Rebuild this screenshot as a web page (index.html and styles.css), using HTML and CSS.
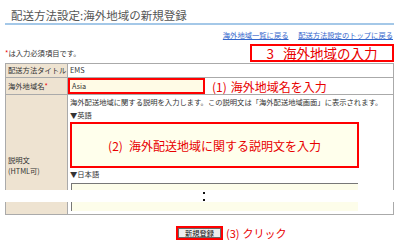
FILE: index.html
```html
<!DOCTYPE html>
<html lang="ja">
<head>
    <meta charset="UTF-8">
    <meta name="viewport" content="width=device-width, initial-scale=1.0">
    <title>配送方法設定:海外地域の新規登録</title>
    <link rel="stylesheet" href="styles.css">
</head>
<body>
    <div class="page">
        <h1 class="page-title">配送方法設定:海外地域の新規登録</h1>
        <!-- Back links -->
        <div class="links">
            <a href="#">海外地域一覧に戻る</a>
            <a href="#">配送方法設定のトップに戻る</a>
        </div>
        <div class="note-row">
            <p class="note"><span class="req">*</span>は入力必須項目です。</p>
            <div class="step-box"><span class="num">3</span>海外地域の入力</div>
        </div>
        <!-- Form table -->
        <div class="form-wrap">
            <table class="form-table">
                <colgroup>
                    <col class="col-label">
                    <col>
                </colgroup>
                <tr class="row-title">
                    <th>配送方法タイトル</th>
                    <td>EMS</td>
                </tr>
                <tr class="row-name">
                    <th>海外地域名<span class="req">*</span></th>
                    <td>
                        <div class="name-cell">
                            <span class="field">Asia</span>
                            <span class="hint"><span class="num">(1)</span>海外地域名を入力</span>
                        </div>
                    </td>
                </tr>
                <tr class="row-desc">
                    <th>
                        <span class="label-line">説明文</span>
                        <span class="label-line">(HTML可)</span>
                    </th>
                    <td>
                        <p>海外配送地域に関する説明を入力します。この説明文は「海外配送地域画面」に表示されます。</p>
                        <p>▼英語</p>
                        <div class="area area-marked">
                            <span class="hint"><span class="num">(2)</span>海外配送地域に関する説明文を入力</span>
                        </div>
                        <p>▼日本語</p>
                        <div class="area"></div>
                    </td>
                </tr>
            </table>
            <!-- cut mark over the long textarea -->
            <div class="cut"><i></i><i></i></div>
        </div>
        <div class="actions">
            <span class="btn-mark">
                <button type="button" class="btn">新規登録</button>
                <span class="hint click"><span class="num">(3)</span>クリック</span>
            </span>
        </div>
    </div>
</body>
</html>
```

FILE: styles.css
```css
/* Reset styles */
* {
    margin: 0;
    padding: 0;
    box-sizing: border-box;
}
body {
    font-family: "Noto Sans CJK JP", sans-serif;
    font-size: 7.3px;
    color: #333;
    background: #fff;
}
.page {
    width: 389px;
    margin-left: 5px;
    padding-top: 7px;
}
/* Page title */
.page-title {
    font-size: 11.5px;
    font-weight: normal;
    color: #555;
    line-height: 16px;
    padding-left: 6px;
    border-bottom: 2px solid #a4c8e8;
}
.links {
    text-align: right;
    margin-top: 4px;
    padding-right: 1px;
    line-height: 12px;
}
.links a {
    color: #3366cc;
    margin-left: 8px;
}
.note-row {
    display: flex;
    justify-content: space-between;
    align-items: center;
    height: 18px;
    margin-top: 3px;
}
.req {
    color: #e00;
}
/* Red annotation boxes and texts */
.step-box {
    width: 144px;
    height: 18px;
    border: 2px solid #f00;
    color: #e80000;
    font-size: 13.5px;
    line-height: 14px;
    text-align: center;
}
.hint {
    color: #e80000;
    font-size: 12px;
    white-space: nowrap;
}
.num {
    margin-right: 6px;
}
.step-box .num {
    margin-right: 9px;
}
.click .num {
    margin-right: 3px;
}
/* Form table */
.form-wrap {
    position: relative;
    margin-top: 1px;
}
.form-table {
    width: 100%;
    border-collapse: collapse;
    table-layout: fixed;
}
.col-label {
    width: 62px;
}
.form-table th,
.form-table td {
    border: 1px solid #aaa;
    text-align: left;
    font-weight: normal;
    padding: 0 2px;
    white-space: nowrap;
    vertical-align: middle;
}
.form-table th {
    background: #eee3d1;
}
.row-title th,
.row-title td {
    height: 14px;
    line-height: 13px;
}
.row-name td {
    padding: 0;
}
.name-cell {
    display: flex;
    align-items: center;
    gap: 7px;
    height: 16px;
}
.name-cell .num {
    margin-right: 4px;
}
.field {
    width: 137px;
    height: 16px;
    border: 2px solid #f00;
    background: #fffbe6;
    padding-left: 2px;
    line-height: 12px;
}
.row-desc th {
    vertical-align: top;
    padding-top: 60px;
}
.label-line {
    display: block;
    line-height: 11px;
}
.row-desc td {
    vertical-align: top;
    padding: 1px 2px 3px;
}
.row-desc p {
    line-height: 13px;
}
.area {
    width: 287px;
    height: 28px;
    margin: 2px 0 0 1px;
    border-top: 1px solid #777;
    border-left: 1px solid #777;
    background: #fdfdea;
}
.area-marked {
    width: 289px;
    height: 46px;
    margin: 0;
    border: 2px solid #f00;
    background: #ffffec;
    display: flex;
    align-items: center;
    justify-content: center;
}
/* White band that marks the cut-off part */
.cut {
    position: absolute;
    top: 127px;
    left: -5px;
    right: -6px;
    height: 12px;
    background: #fff;
}
.cut i {
    position: absolute;
    left: 203px;
    width: 2px;
    height: 2px;
    background: #111;
}
.cut i:first-child {
    top: 2px;
}
.cut i:last-child {
    top: 9px;
}
/* Submit button */
.actions {
    margin-top: 11px;
    text-align: center;
}
.btn-mark {
    position: relative;
    display: inline-block;
    border: 2px solid #f00;
    line-height: 0;
}
.btn {
    width: 43px;
    height: 10px;
    border: 1px solid #666;
    background: #eee;
    font-family: inherit;
    font-size: 7.3px;
    line-height: 8px;
    color: #111;
}
.click {
    position: absolute;
    left: calc(100% + 5px);
    top: 50%;
    transform: translateY(-50%);
    font-size: 11px;
    line-height: 14px;
}
```
